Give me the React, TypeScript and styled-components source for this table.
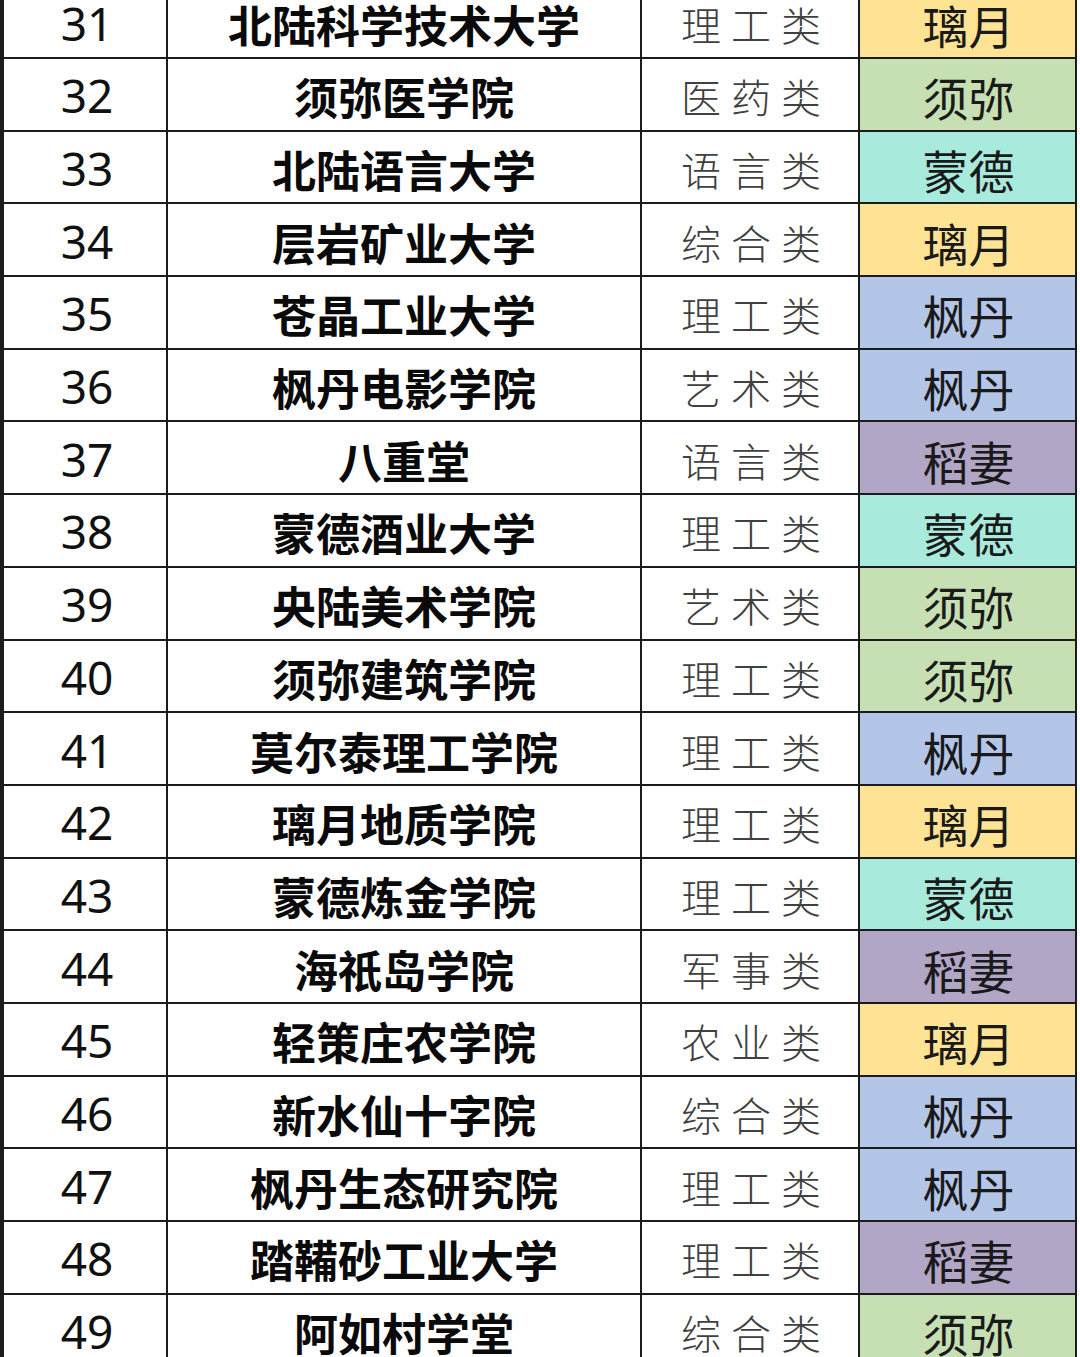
import React from "react";
import styled, { createGlobalStyle } from "styled-components";

const Global = createGlobalStyle`
  html, body { margin: 0; padding: 0; background: #ffffff; }
  body { overflow: hidden; font-family: "Noto Sans CJK SC", "Noto Sans", sans-serif; }
`;

type Region = "璃月" | "须弥" | "蒙德" | "枫丹" | "稻妻";

const regionColors: Record<Region, string> = {
  璃月: "#ffe395",
  须弥: "#c6e0b4",
  蒙德: "#a8ebdd",
  枫丹: "#b4c6e7",
  稻妻: "#b1a6c6",
};

const rows: [number, string, string, Region][] = [
  [31, "北陆科学技术大学", "理工类", "璃月"],
  [32, "须弥医学院", "医药类", "须弥"],
  [33, "北陆语言大学", "语言类", "蒙德"],
  [34, "层岩矿业大学", "综合类", "璃月"],
  [35, "苍晶工业大学", "理工类", "枫丹"],
  [36, "枫丹电影学院", "艺术类", "枫丹"],
  [37, "八重堂", "语言类", "稻妻"],
  [38, "蒙德酒业大学", "理工类", "蒙德"],
  [39, "央陆美术学院", "艺术类", "须弥"],
  [40, "须弥建筑学院", "理工类", "须弥"],
  [41, "莫尔泰理工学院", "理工类", "枫丹"],
  [42, "璃月地质学院", "理工类", "璃月"],
  [43, "蒙德炼金学院", "理工类", "蒙德"],
  [44, "海祇岛学院", "军事类", "稻妻"],
  [45, "轻策庄农学院", "农业类", "璃月"],
  [46, "新水仙十字院", "综合类", "枫丹"],
  [47, "枫丹生态研究院", "理工类", "枫丹"],
  [48, "踏鞴砂工业大学", "理工类", "稻妻"],
  [49, "阿如村学堂", "综合类", "须弥"],
];

const Table = styled.div`
  width: 1077px;
  margin-top: -13.7px;
  display: flex;
  flex-direction: column;
  gap: 2px;
  background: #1c1c1c;
  padding: 0 2px 0 4px;
  box-sizing: border-box;
`;

const Row = styled.div`
  display: grid;
  grid-template-columns: 162px 472px 216px 215px;
  column-gap: 2px;
  height: 70.7px;
`;

const Cell = styled.div<{ $bg?: string }>`
  display: flex;
  align-items: center;
  justify-content: center;
  background: ${(p) => p.$bg ?? "#ffffff"};
  padding-top: 4px;
  box-sizing: border-box;
  overflow: hidden;
  white-space: nowrap;
`;

const Num = styled(Cell)`
  font-family: "Noto Sans", "Noto Sans CJK SC", sans-serif;
  font-size: 46px;
  color: #111111;
  padding-top: 2px;
  padding-left: 4px;
`;

const Name = styled(Cell)`
  font-size: 44px;
  font-weight: 700;
  color: #0a0a0a;
`;

const Category = styled(Cell)`
  font-size: 40px;
  font-weight: 300;
  color: #404040;
  letter-spacing: 10px;
  padding-left: 12px;
`;

const RegionCell = styled(Cell)`
  font-size: 46px;
  font-weight: 400;
  color: #1a1a1a;
  padding-left: 2px;
`;

export default function App() {
  return (
    <>
      <Global />
      <Table>
        {rows.map(([n, name, cat, region]) => (
          <Row key={n}>
            <Num>{n}</Num>
            <Name>{name}</Name>
            <Category>{cat}</Category>
            <RegionCell $bg={regionColors[region]}>{region}</RegionCell>
          </Row>
        ))}
      </Table>
    </>
  );
}
